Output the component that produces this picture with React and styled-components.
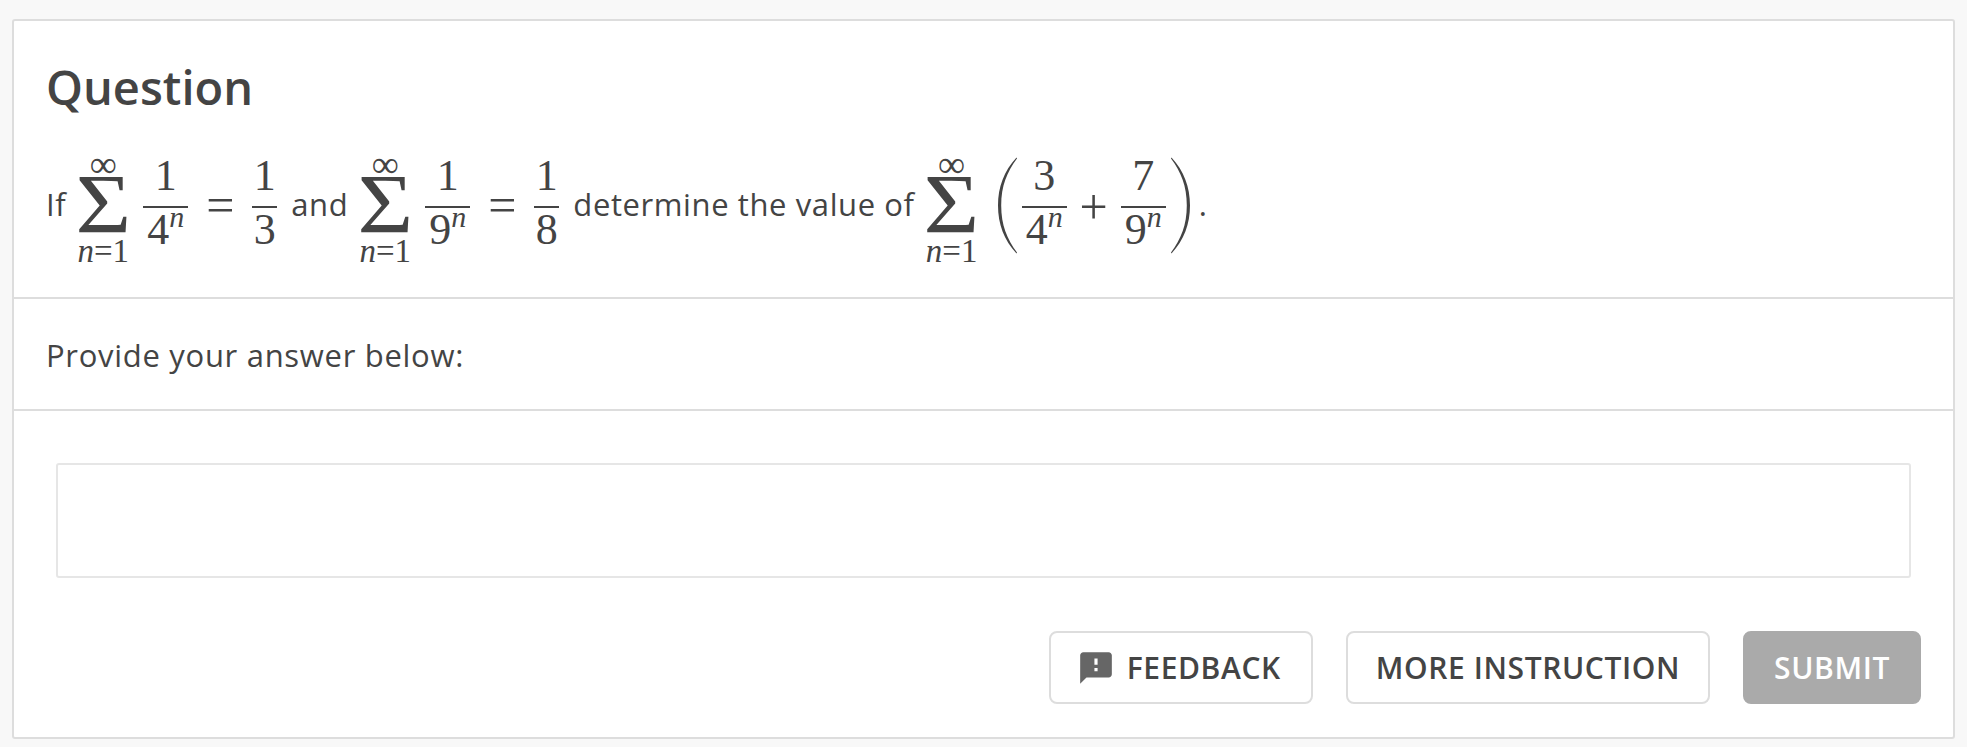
import styled, { createGlobalStyle } from 'styled-components';
import { MdFeedback } from 'react-icons/md';

const GlobalStyle = createGlobalStyle`
  html, body {
    margin: 0;
    padding: 0;
    background: #f8f8f8;
  }
  body {
    font-family: "Open Sans", "Liberation Sans", sans-serif;
    color: #444;
  }
`;

const Sum = () => (
  <SumOp>
    <SumUpper>∞</SumUpper>
    <SumSign>Σ</SumSign>
    <SumLower>
      <i>n</i>=1
    </SumLower>
  </SumOp>
);

const Power = ({ base }) => (
  <span>
    {base}
    <Sup>n</Sup>
  </span>
);

const Frac = ({ top, bottom, wide }) => (
  <Fraction $wide={wide}>
    <Numer>{top}</Numer>
    <Denom>{bottom}</Denom>
  </Fraction>
);

const Paren = ({ flip }) => (
  <ParenIcon viewBox="0 0 20 97" $flip={flip}>
    <path d="M19.5 0.5C7 14 1 30 1 48.5S7 83 19.5 96.5L20 95.5C10 82 4.2 68 4.2 48.5S10 15 20 1.5Z" fill="currentColor" />
  </ParenIcon>
);

export default function App() {
  return (
    <>
      <GlobalStyle />
      <Card>
        <QuestionSection>
          <Title>Question</Title>
          <MathRow>
            <Word>If</Word>
            <Sum />
            <Frac wide top="1" bottom={<Power base="4" />} />
            <Rel>=</Rel>
            <Frac top="1" bottom="3" />
            <Word $gap>and</Word>
            <Sum />
            <Frac wide top="1" bottom={<Power base="9" />} />
            <Rel>=</Rel>
            <Frac top="1" bottom="8" />
            <Word $gap>determine the value of</Word>
            <Sum />
            <Paren />
            <Frac wide top="3" bottom={<Power base="4" />} />
            <Rel $plus>+</Rel>
            <Frac wide top="7" bottom={<Power base="9" />} />
            <Paren flip />
            <Word $dot>.</Word>
          </MathRow>
        </QuestionSection>
        <PromptSection>Provide your answer below:</PromptSection>
        <AnswerSection>
          <AnswerInput type="text" />
          <Actions>
            <Button $icon>
              <MdFeedback size={38} color="#666" />
              FEEDBACK
            </Button>
            <Button>MORE INSTRUCTION</Button>
            <Button $primary>SUBMIT</Button>
          </Actions>
        </AnswerSection>
      </Card>
    </>
  );
}

const Card = styled.div`
  margin: 19px 12px 8px;
  background: #fff;
  border: 2px solid #ddd;
  border-radius: 3px;
`;

const QuestionSection = styled.section`
  box-sizing: border-box;
  height: 278px;
  padding: 0 32px;
  border-bottom: 2px solid #ddd;
`;

const Title = styled.h1`
  margin: 0;
  padding-top: 38px;
  font-size: 47px;
  line-height: 56px;
  font-weight: 600;
  color: #444;
`;

const MathRow = styled.div`
  display: flex;
  align-items: flex-start;
  height: 105px;
  margin-top: 42px;
  font-size: 31px;
  letter-spacing: 0.6px;
`;

const Word = styled.span`
  white-space: pre;
  line-height: 94px;
  margin: ${({ $gap, $dot }) => ($gap ? '0 0 0 14px' : $dot ? '0 0 0 3px' : '0')};
`;

const SumOp = styled.span`
  display: flex;
  flex-direction: column;
  align-items: center;
  width: 54px;
  margin: 0 13px 0 10px;
  font-family: "Liberation Serif", serif;
  letter-spacing: 0;
`;

const SumUpper = styled.span`
  height: 20px;
  font-size: 38px;
  line-height: 14px;
`;

const SumSign = styled.span`
  height: 65px;
  font-size: 84px;
  line-height: 55px;
  transform: scaleX(1.14);
`;

const SumLower = styled.span`
  height: 20px;
  font-size: 33px;
  line-height: 19px;
  white-space: nowrap;
`;

const Sup = styled.i`
  font-size: 30px;
  vertical-align: 17px;
  line-height: 0;
`;

const Fraction = styled.span`
  display: flex;
  flex-direction: column;
  align-items: center;
  width: ${({ $wide }) => ($wide ? '45px' : '25px')};
  font-family: "Liberation Serif", serif;
  font-size: 44px;
  letter-spacing: 0;
`;

const Numer = styled.span`
  box-sizing: border-box;
  width: 100%;
  height: 51px;
  line-height: 37px;
  text-align: center;
  border-bottom: 2px solid #444;
`;

const Denom = styled.span`
  height: 54px;
  line-height: 44px;
  white-space: nowrap;
`;

const Rel = styled.span`
  width: ${({ $plus }) => ($plus ? '54px' : '64px')};
  text-align: center;
  font-family: "Liberation Serif", serif;
  font-size: 50px;
  line-height: ${({ $plus }) => ($plus ? '100px' : '96px')};
  letter-spacing: 0;
`;

const ParenIcon = styled.svg`
  width: 20px;
  height: 97px;
  flex: none;
  color: #444;
  margin: 0 5px;
  transform: ${({ $flip }) => ($flip ? 'scaleX(-1)' : 'none')};
`;

const PromptSection = styled.section`
  box-sizing: border-box;
  height: 112px;
  padding: 2px 32px 0;
  border-bottom: 2px solid #ddd;
  display: flex;
  align-items: center;
  font-size: 31px;
  letter-spacing: 0.7px;
`;

const AnswerSection = styled.section`
  padding: 52px 32px 33px 42px;
`;

const AnswerInput = styled.input`
  display: block;
  box-sizing: border-box;
  width: calc(100% - 10px);
  height: 115px;
  border: 2px solid #e6e6e6;
  border-radius: 3px;
  background: #fff;
  outline: none;
`;

const Actions = styled.div`
  display: flex;
  justify-content: flex-end;
  gap: 33px;
  margin-top: 53px;
`;

const buttonPadding = ({ $icon, $primary }) => {
  if ($icon) return '0 30px 0 26px';
  return $primary ? '0 29px' : '0 28px';
};

const Button = styled.button`
  display: flex;
  align-items: center;
  gap: 12px;
  box-sizing: border-box;
  height: 73px;
  padding: ${buttonPadding};
  border: 2px solid ${({ $primary }) => ($primary ? '#aaa' : '#ddd')};
  border-radius: 8px;
  background: ${({ $primary }) => ($primary ? '#aaa' : '#fff')};
  color: ${({ $primary }) => ($primary ? '#fff' : '#444')};
  font-family: "Open Sans", "Liberation Sans", sans-serif;
  font-size: 30px;
  font-weight: 600;
  letter-spacing: 0.6px;
`;
